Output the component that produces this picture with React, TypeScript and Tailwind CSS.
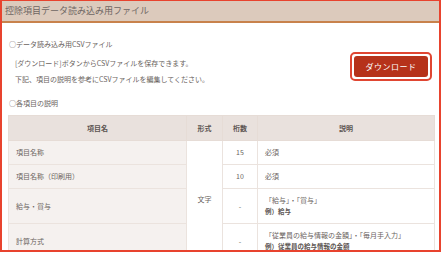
const rows = [
  { name: "項目名称", digits: "15", desc: ["必須"] },
  { name: "項目名称（印刷用）", digits: "10", desc: ["必須"] },
  { name: "給与・賞与", digits: "-", desc: ["「給与」・「賞与」", "例）給与"] },
  {
    name: "計算方式",
    digits: "-",
    desc: ["「従業員の給与情報の金額」・「毎月手入力」", "例）従業員の給与情報の金額"],
  },
];

export default function App() {
  return (
    <div
      className="w-[441px] h-[252px] overflow-hidden bg-white border-2 border-t border-[#e8432e] text-[#6a6360]"
      style={{ fontFamily: '"Noto Sans CJK JP", "Noto Sans", sans-serif' }}
    >
      {/* title bar */}
      <div className="h-[22px] bg-[#dccabc] border-b-2 border-[#c8824c] pl-[3px] flex items-center text-[9px] text-[#6e6663]">
        控除項目データ読み込み用ファイル
      </div>

      <div className="px-[5px]">
        <p className="mt-[15px] h-[12px] leading-[12px] text-[7px] pl-[2px]">○データ読み込み用CSVファイル</p>

        <div className="mt-[2px] flex items-start justify-between">
          <div className="pt-[3px] pl-[8px] text-[7px] leading-[16px]">
            <p>[ダウンロード]ボタンからCSVファイルを保存できます。</p>
            <p>下記、項目の説明を参考にCSVファイルを編集してください。</p>
          </div>
          <div className="mr-[2px] border-2 border-[#e04632] rounded-[5px] p-[2px]">
            <button className="w-[74px] h-[21px] rounded-[3px] bg-[#b6321a] text-white text-[8px] tracking-[0.5px] flex items-center justify-center">
              ダウンロード
            </button>
          </div>
        </div>

        <p className="mt-[10px] h-[12px] leading-[12px] text-[7px] pl-[2px]">○各項目の説明</p>

        <table className="mt-[6px] ml-[1px] w-[426px] border-collapse text-[7px] table-fixed">
          <colgroup>
            <col className="w-[178px]" />
            <col className="w-[36px]" />
            <col className="w-[35px]" />
            <col className="w-[177px]" />
          </colgroup>
          <thead>
            <tr className="h-[25px] bg-[#e9e1dd] text-[#5c5552] font-bold">
              <th className="border border-[#e6dcd6] font-bold">項目名</th>
              <th className="border border-[#e6dcd6] font-bold">形式</th>
              <th className="border border-[#e6dcd6] font-bold">桁数</th>
              <th className="border border-[#e6dcd6] font-bold">説明</th>
            </tr>
          </thead>
          <tbody>
            {rows.map((r, i) => (
              <tr key={r.name} className={r.desc.length > 1 ? "h-[35px]" : "h-[24px]"}>
                <td className="border border-[#ebe3de] bg-[#f5f1ef] pl-[7px]">{r.name}</td>
                {i === 0 && (
                  <td rowSpan={4} className="border border-[#ebe3de] text-center">
                    文字
                  </td>
                )}
                <td className="border border-[#ebe3de] text-center">{r.digits}</td>
                <td className="border border-[#ebe3de] pl-[7px] leading-[11px]">
                  <p>{r.desc[0]}</p>
                  {r.desc[1] && <p className="font-bold text-[6.5px] text-[#5c5552]">{r.desc[1]}</p>}
                </td>
              </tr>
            ))}
          </tbody>
        </table>
      </div>
    </div>
  );
}
